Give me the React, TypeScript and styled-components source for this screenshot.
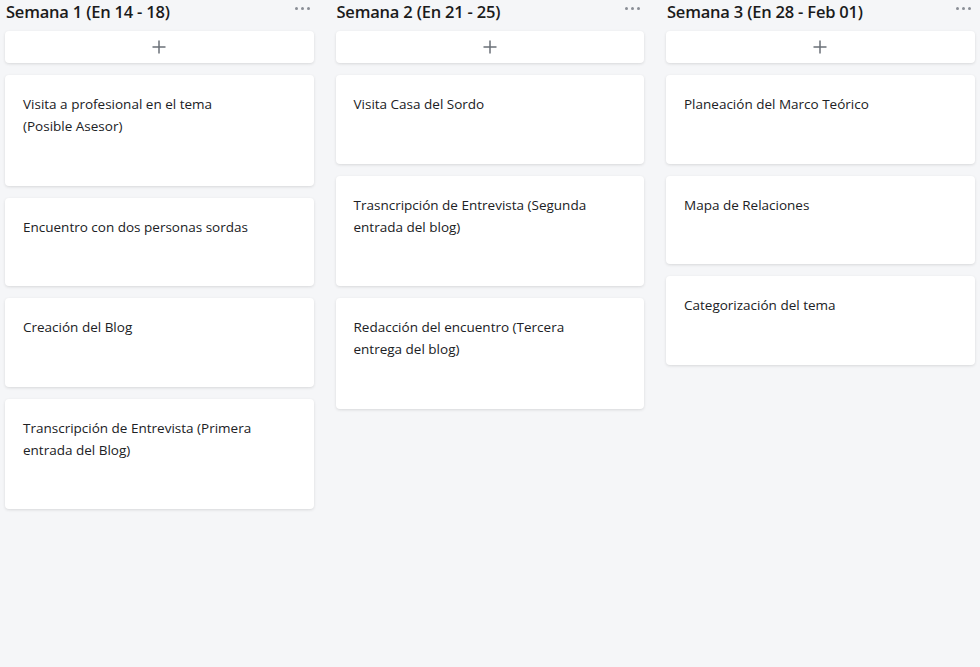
import styled, { createGlobalStyle } from "styled-components";

const GlobalStyle = createGlobalStyle`
  html, body {
    margin: 0;
    padding: 0;
    background: #f5f6f8;
  }
  body {
    font-family: "Open Sans", "Noto Sans", Arial, sans-serif;
    color: #1f1f1f;
  }
`;

const Board = styled.div`
  display: grid;
  grid-template-columns: repeat(3, 308.5px);
  column-gap: 22px;
  padding: 0 5px;
  min-height: 667px;
  box-sizing: border-box;
  background: #f5f6f8;
`;

const Column = styled.div`
  display: flex;
  flex-direction: column;
  gap: 12px;
`;

const ColumnHeader = styled.div`
  display: flex;
  align-items: center;
  justify-content: space-between;
  height: 23px;
  margin-bottom: -4px;
`;

const ColumnTitle = styled.h2`
  margin: 0;
  padding-left: 1px;
  font-size: 16.5px;
  font-weight: 600;
  letter-spacing: -0.2px;
  color: #1b1b1b;
  white-space: nowrap;
`;

const MenuDots = styled.button`
  display: flex;
  gap: 3px;
  align-items: center;
  padding: 0 4px;
  margin-top: -6px;
  background: none;
  border: none;
  cursor: pointer;

  span {
    width: 3px;
    height: 3px;
    border-radius: 50%;
    background: #8a8e96;
  }
`;

const AddButton = styled.button`
  display: flex;
  align-items: center;
  justify-content: center;
  height: 32px;
  padding: 0;
  background: #fff;
  border: none;
  border-radius: 4px;
  box-shadow: 0 1px 3px rgb(0 0 0 / 12%);
  cursor: pointer;
`;

const Card = styled.div`
  box-sizing: border-box;
  padding: 18px 18px 48.5px 18px;
  background: #fff;
  border-radius: 4px;
  box-shadow: 0 1px 3px rgb(0 0 0 / 12%);
`;

const CardText = styled.p`
  margin: 0;
  max-width: 238px;
  font-size: 13.5px;
  line-height: 22px;
  color: #202124;
`;

const PlusIcon = () => (
  <svg width="14" height="14" viewBox="0 0 14 14">
    <path d="M7 0.5v13M0.5 7h13" stroke="#6b7078" strokeWidth="1.5" />
  </svg>
);

const columns = [
  {
    title: "Semana 1 (En 14 - 18)",
    cards: [
      "Visita a profesional en el tema (Posible Asesor)",
      "Encuentro con dos personas sordas",
      "Creación del Blog",
      "Transcripción de Entrevista (Primera entrada del Blog)",
    ],
  },
  {
    title: "Semana 2 (En 21 - 25)",
    cards: [
      "Visita Casa del Sordo",
      "Trasncripción de Entrevista (Segunda entrada del blog)",
      "Redacción del encuentro (Tercera entrega del blog)",
    ],
  },
  {
    title: "Semana 3 (En 28 - Feb 01)",
    cards: [
      "Planeación del Marco Teórico",
      "Mapa de Relaciones",
      "Categorización del tema",
    ],
  },
];

const App = () => {
  return (
    <>
      <GlobalStyle />
      <Board>
        {columns.map((col) => (
          <Column key={col.title}>
            <ColumnHeader>
              <ColumnTitle>{col.title}</ColumnTitle>
              <MenuDots aria-label="Más opciones">
                <span />
                <span />
                <span />
              </MenuDots>
            </ColumnHeader>
            <AddButton aria-label="Agregar tarjeta">
              <PlusIcon />
            </AddButton>
            {col.cards.map((text) => (
              <Card key={text}>
                <CardText>{text}</CardText>
              </Card>
            ))}
          </Column>
        ))}
      </Board>
    </>
  );
};

export default App;
